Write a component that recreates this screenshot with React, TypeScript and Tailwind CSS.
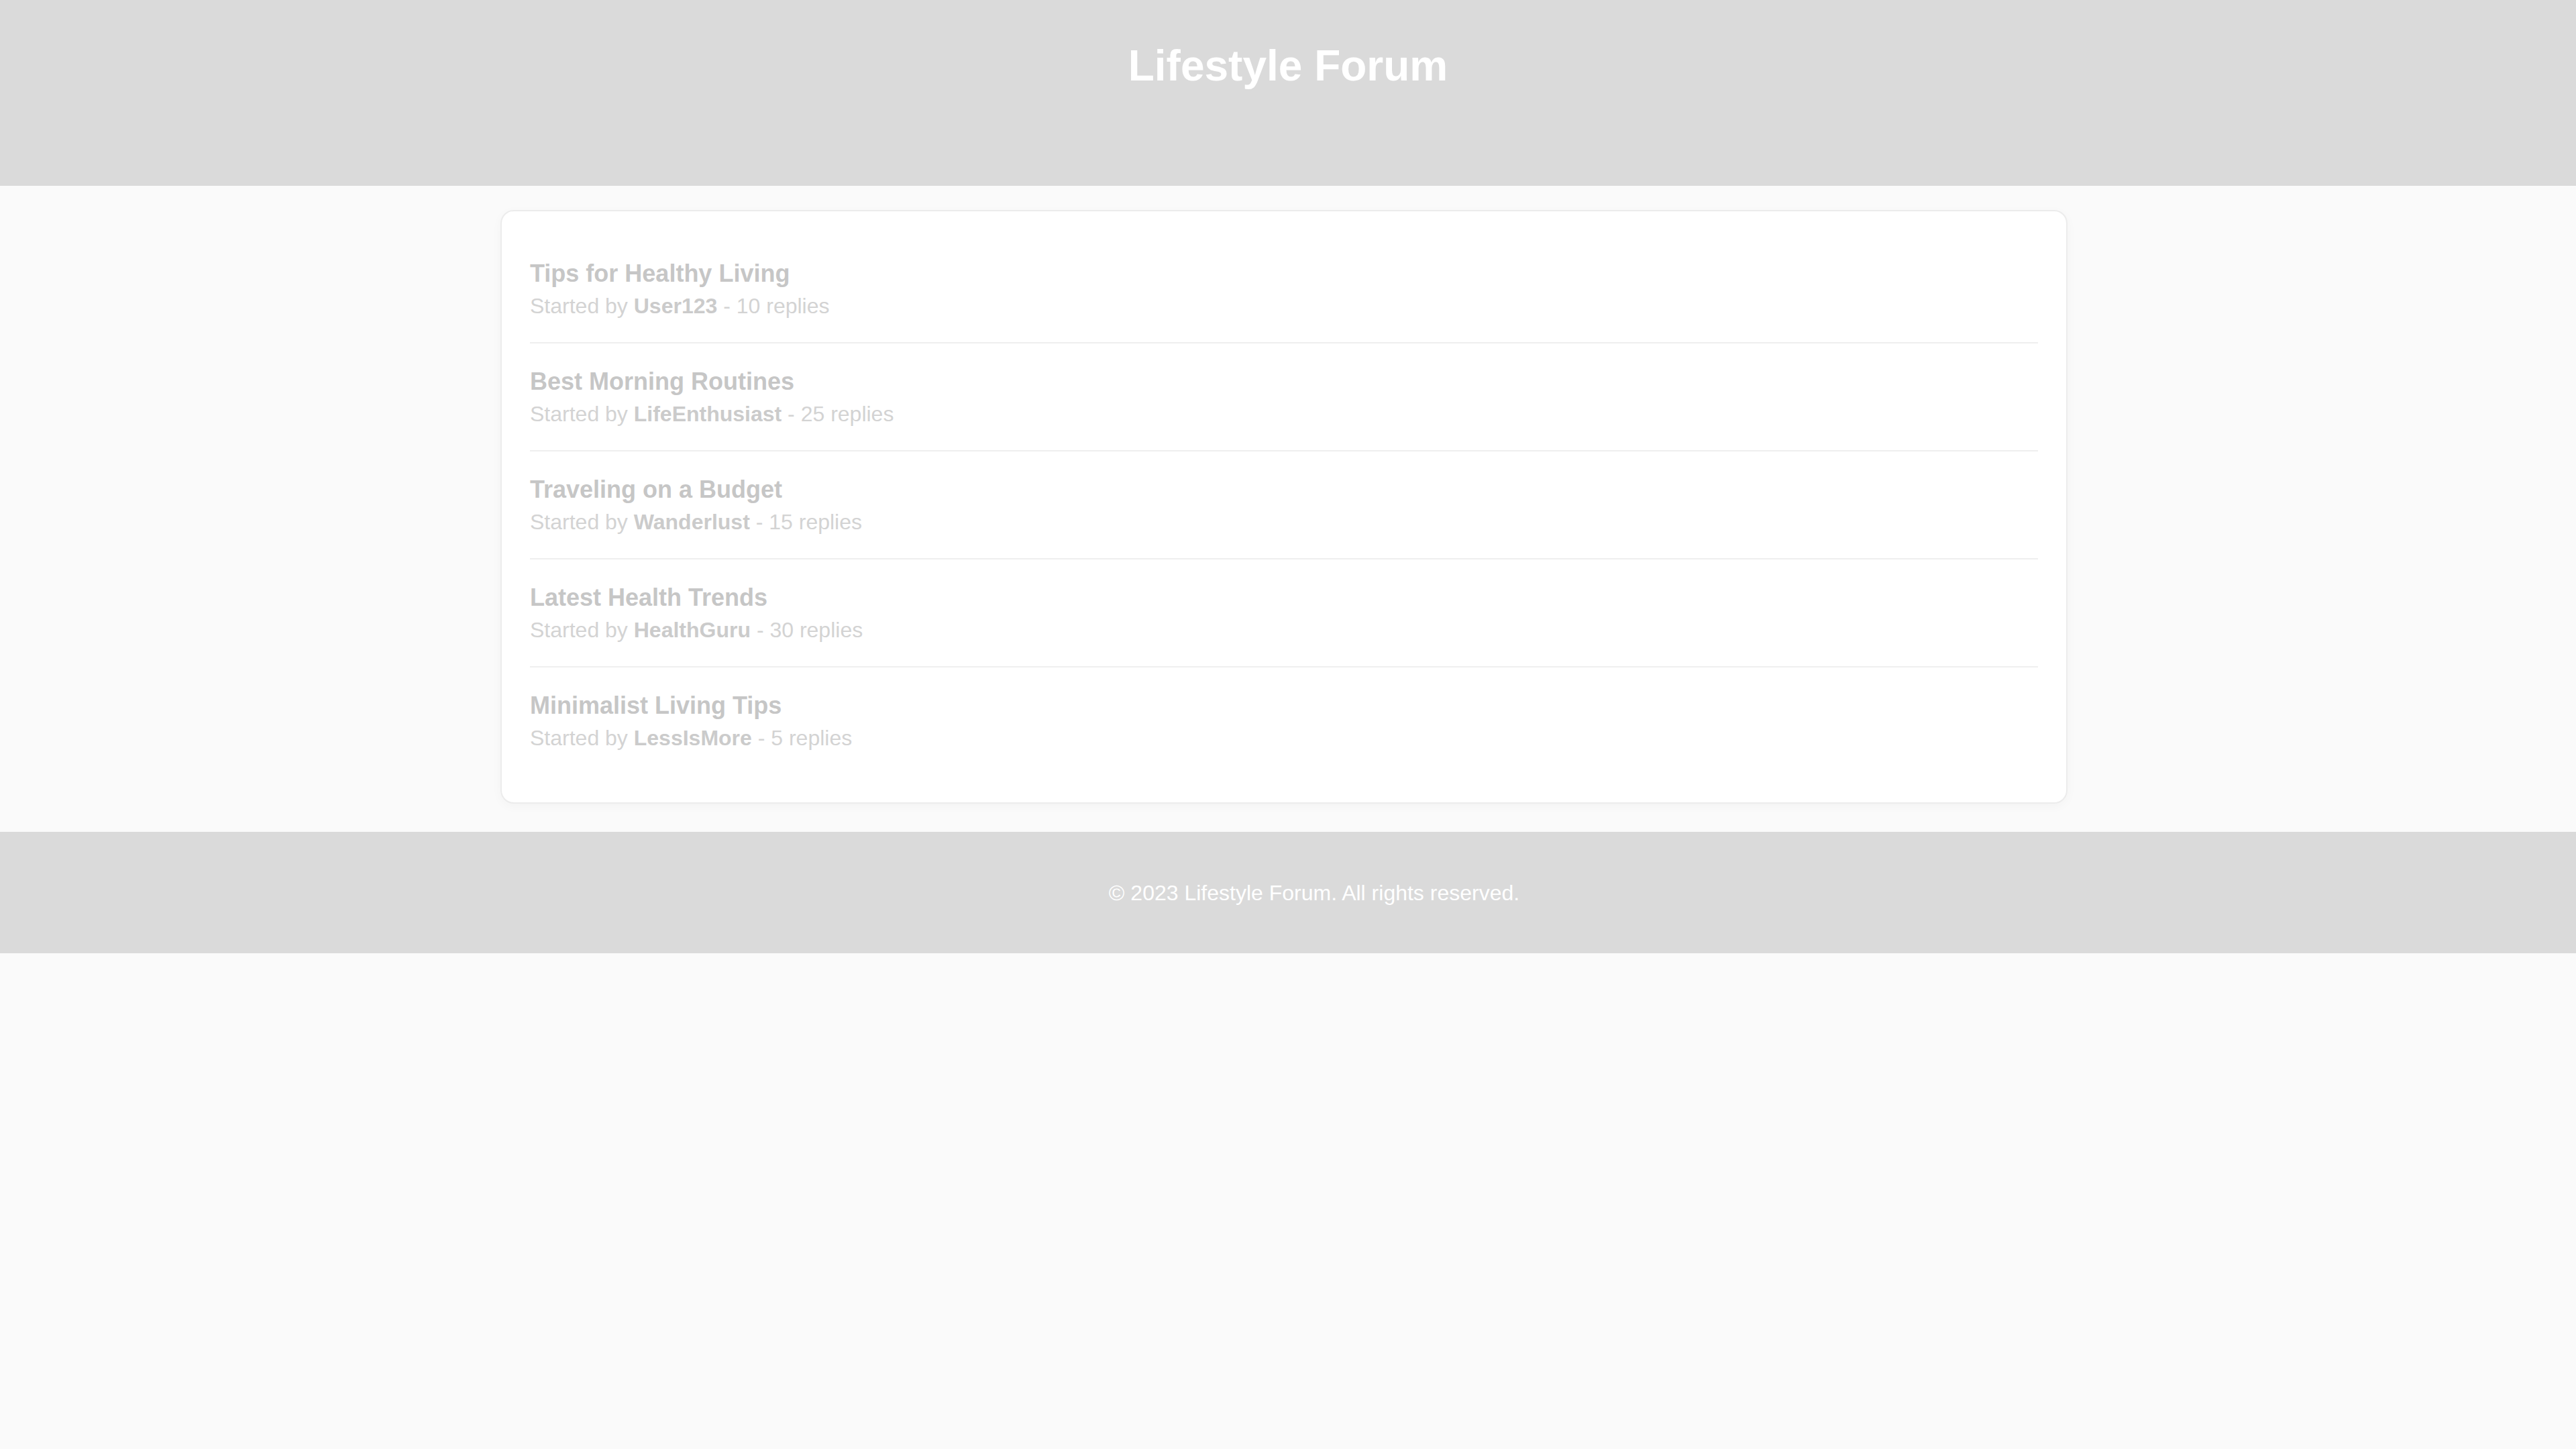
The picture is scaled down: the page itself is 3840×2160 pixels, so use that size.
import React from "react";

const threads = [
  { title: "Tips for Healthy Living", author: "User123", replies: 10 },
  { title: "Best Morning Routines", author: "LifeEnthusiast", replies: 25 },
  { title: "Traveling on a Budget", author: "Wanderlust", replies: 15 },
  { title: "Latest Health Trends", author: "HealthGuru", replies: 30 },
  { title: "Minimalist Living Tips", author: "LessIsMore", replies: 5 },
];

export default function App() {
  return (
    <div className="min-h-screen bg-[#fafafa] font-['Liberation_Sans',Arial,sans-serif]">
      <header className="h-[277px] bg-[#dadada] pt-[61px] text-center">
        <h1 className="text-[64px] font-bold leading-[74px] text-white">Lifestyle Forum</h1>
      </header>

      <main className="pt-[36px] pb-[42px] pr-[12px]">
        <div className="mx-auto w-[2336px] rounded-[20px] border-2 border-[#ececec] bg-white px-[42px] pt-[36px] pb-[42px] shadow-[0_4px_16px_rgba(0,0,0,0.03)]">
          <ul>
            {threads.map((t, i) => (
              <li
                key={t.title}
                className={
                  i < threads.length - 1
                    ? "border-b-2 border-[#efefef] py-[35px]"
                    : "py-[35px]"
                }
              >
                <h2 className="text-[36px] font-bold leading-[43px] text-[#c6c6c6]">{t.title}</h2>
                <p className="mt-[8px] text-[32px] leading-[38px] text-[#d3d3d3]">
                  Started by <span className="font-bold text-[#cbcbcb]">{t.author}</span> - {t.replies} replies
                </p>
              </li>
            ))}
          </ul>
        </div>
      </main>

      <footer className="flex h-[181px] items-center justify-center bg-[#dadada] pl-[78px]">
        <p className="text-[32px] text-white">© 2023 Lifestyle Forum. All rights reserved.</p>
      </footer>
    </div>
  );
}
